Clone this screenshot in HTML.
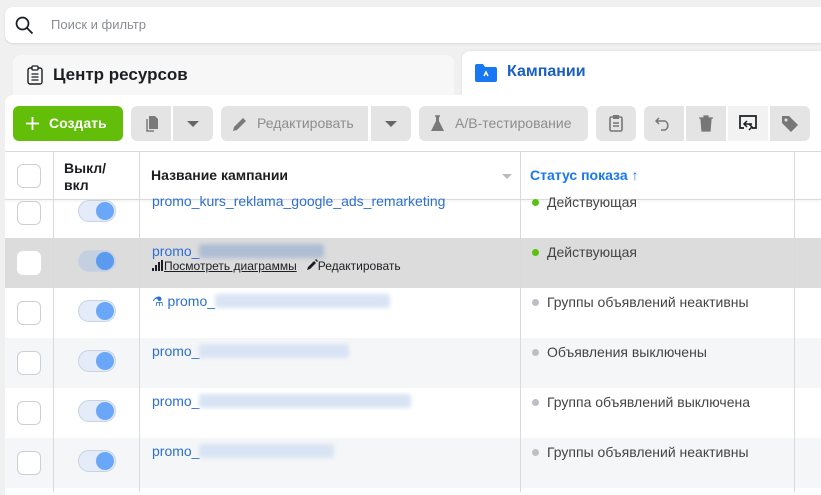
<!DOCTYPE html>
<html><head><meta charset="utf-8"><style>
*{box-sizing:border-box;margin:0;padding:0}
body{width:821px;height:490px;overflow:hidden;background:#f0f0f0;font-family:"Liberation Sans","DejaVu Sans",sans-serif;position:relative}
.abs{position:absolute}
.search{left:5px;top:7px;width:830px;height:36px;background:#fff;border-radius:8px;box-shadow:0 1px 2px rgba(0,0,0,.1)}
.search span{position:absolute;left:46px;top:10px;font-size:13px;color:#8a8d91}
.tabL{left:13px;top:55px;width:441px;height:50px;background:#f7f7f7;border-radius:8px 8px 0 0}
.tabR{left:462px;top:51px;width:370px;height:55px;background:#fff;border-radius:8px 8px 0 0;box-shadow:0 0 3px rgba(0,0,0,.08)}
.panel{left:5px;top:95px;width:830px;height:400px;background:#fff;border-radius:8px 8px 0 0}
.btn{position:absolute;top:106px;height:35px;background:#e4e4e4;border-radius:6px;font-size:14px;color:#8d8d8d}
.hline{position:absolute;left:5px;width:816px;height:1px;background:#dadada}
.vline{position:absolute;width:1px;background:#dadada}
.row{position:absolute;left:5px;width:816px;height:50px}
.cb{position:absolute;left:17px;width:24px;height:24px;border:1px solid #ccd0d5;border-radius:6px;background:#fff}
.tg{position:absolute;left:78px;width:38px;height:22px;border-radius:11px;background:#e3ecf8;border:1px solid #c9d3e0}
.tg i{position:absolute;right:1px;top:1px;width:18px;height:18px;border-radius:50%;background:#6aa7f8}
.nm{position:absolute;left:152px;font-size:14px;color:#2d6fd2}
.bl{display:inline-block;height:14px;vertical-align:-2px;background:#c8d6ea;filter:blur(2px);border-radius:3px}
.st{position:absolute;left:532px;font-size:14px;color:#444}
.st i{display:inline-block;width:7px;height:7px;border-radius:50%;background:#bcc0c4;margin-right:8px;vertical-align:1px}
</style></head><body>
<div class="abs search">
<svg class="abs" style="left:10px;top:9px" width="19" height="19" viewBox="0 0 19 19"><circle cx="7.5" cy="7.5" r="6" fill="none" stroke="#1c1e21" stroke-width="1.7"/><path d="M12 12l5.5 5.5" stroke="#1c1e21" stroke-width="1.8"/></svg>
<span>Поиск и фильтр</span></div>
<div class="abs tabL">
<svg class="abs" style="left:14px;top:10px" width="16" height="20" viewBox="0 0 16 20"><rect x="1" y="3" width="14" height="16" rx="2" fill="none" stroke="#1c1e21" stroke-width="1.4"/><rect x="5" y="1" width="6" height="4" rx="1" fill="#fff" stroke="#1c1e21" stroke-width="1.3"/><path d="M4.5 9h7M4.5 12h7M4.5 15h7" stroke="#1c1e21" stroke-width="1.2"/></svg>
<span class="abs" style="left:40px;top:10px;font-size:17px;font-weight:bold;color:#1c1e21">Центр ресурсов</span></div>
<div class="abs tabR">
<svg class="abs" style="left:13px;top:13px" width="22" height="18" viewBox="0 0 22 18"><path d="M0 2a2 2 0 012-2h6l2 3h10a2 2 0 012 2v11a2 2 0 01-2 2H2a2 2 0 01-2-2z" fill="#1877f2"/><path d="M9 12l2-4 2 4" stroke="#fff" stroke-width="1.5" fill="none"/></svg>
<span class="abs" style="left:45px;top:12px;font-size:16px;font-weight:bold;color:#1a5fc9">Кампании</span></div>
<div class="abs panel"></div>
<div class="btn" style="left:13px;width:110px;background:#63be09;color:#fff;font-weight:bold"><svg class="abs" style="left:13px;top:11px" width="13" height="13" viewBox="0 0 13 13"><path d="M6.5 0v13M0 6.5h13" stroke="#fff" stroke-width="1.8"/></svg><span class="abs" style="left:36px;top:9px">Создать</span></div>
<div class="btn" style="left:131px;width:40px;border-radius:6px 0 0 6px"><svg class="abs" style="left:12px;top:9px" width="17" height="17" viewBox="0 0 17 17"><path d="M6 1h6l3 3v10H6z" fill="#7a7a7a"/><path d="M4 4v12h7" fill="none" stroke="#7a7a7a" stroke-width="1.5"/></svg></div>
<div class="btn" style="left:173px;width:40px;border-radius:0 6px 6px 0"><span class="abs" style="left:14px;top:15px;border:6px solid transparent;border-top:6px solid #666"></span></div>
<div class="btn" style="left:221px;width:147px;border-radius:6px 0 0 6px"><svg class="abs" style="left:11px;top:9px" width="17" height="17" viewBox="0 0 17 17"><path d="M1 16l1-4 9-9 3 3-9 9z" fill="#7a7a7a"/></svg><span class="abs" style="left:36px;top:9px">Редактировать</span></div>
<div class="btn" style="left:371px;width:40px;border-radius:0 6px 6px 0"><span class="abs" style="left:14px;top:15px;border:6px solid transparent;border-top:6px solid #666"></span></div>
<div class="btn" style="left:419px;width:169px"><svg class="abs" style="left:11px;top:9px" width="15" height="17" viewBox="0 0 15 17"><path d="M5 1h5M6 1v5L1 16h13L9 6V1" fill="#7a7a7a"/><path d="M5 1h5" stroke="#7a7a7a" stroke-width="1.5"/></svg><span class="abs" style="left:36px;top:9px">A/B-тестирование</span></div>
<div class="btn" style="left:596px;width:40px"><svg class="abs" style="left:13px;top:8px" width="14" height="18" viewBox="0 0 14 18"><rect x="1" y="3" width="12" height="14" rx="1.5" fill="none" stroke="#777" stroke-width="1.6"/><rect x="4" y="1" width="6" height="4" fill="#777"/><path d="M4 9h6M4 12h6" stroke="#777" stroke-width="1.4"/></svg></div>
<div class="btn" style="left:644px;width:40px;border-radius:6px 0 0 6px"><svg class="abs" style="left:11px;top:10px" width="17" height="15" viewBox="0 0 17 15"><path d="M4 2L1 5l3 3M1 5h9a5 5 0 010 9H6" fill="none" stroke="#777" stroke-width="1.5"/></svg></div>
<div class="btn" style="left:686px;width:40px;border-radius:0"><svg class="abs" style="left:13px;top:9px" width="14" height="17" viewBox="0 0 14 17"><path d="M0 3h14M5 3V1h4v2M2 4l1 12h8l1-12z" fill="#777" stroke="#777" stroke-width="1.2"/></svg></div>
<div class="btn" style="left:728px;width:40px;border-radius:0;background:#f2f2f2"><svg class="abs" style="left:11px;top:9px" width="18" height="17" viewBox="0 0 18 17"><path d="M5 13H1V1h16v12h-4" fill="none" stroke="#1c1e21" stroke-width="1.7"/><path d="M8 6l-3 3 3 3M5 9h8M10 9l3 3-3 3" fill="none" stroke="#1c1e21" stroke-width="1.5"/></svg></div>
<div class="btn" style="left:770px;width:40px;border-radius:0 6px 6px 0"><svg class="abs" style="left:11px;top:9px" width="18" height="17" viewBox="0 0 18 17"><path d="M1 1h7l9 9-7 7-9-9z" fill="#777"/><circle cx="5" cy="5" r="1.5" fill="#e4e4e4"/></svg></div>

<div class="hline" style="top:151px"></div>
<div class="row" style="top:238px;background:#dcdcdd"></div>
<div class="row" style="top:338px;background:#f5f6f7"></div>
<div class="row" style="top:438px;background:#f5f6f7"></div>
<div class="hline" style="top:199px;box-shadow:0 1px 2px rgba(0,0,0,.1)"></div>
<div class="vline" style="left:53px;top:152px;height:340px"></div>
<div class="vline" style="left:139px;top:152px;height:340px"></div>
<div class="vline" style="left:520px;top:152px;height:340px"></div>
<div class="vline" style="left:794px;top:152px;height:340px"></div>
<div class="cb" style="top:164px"></div>
<span class="abs" style="left:64px;top:160px;font-size:14px;font-weight:bold;color:#1c1e21;line-height:17px">Выкл/<br>вкл</span>
<span class="abs" style="left:151px;top:167px;font-size:14px;font-weight:bold;color:#1c1e21">Название кампании</span>
<span class="abs" style="left:502px;top:174px;border:5px solid transparent;border-top:5px solid #bbb"></span>
<span class="abs" style="left:530px;top:167px;font-size:14px;font-weight:bold;color:#1877f2">Статус показа ↑</span>

<div class="cb" style="top:201px"></div><div class="tg" style="top:200px"><i></i></div>
<div class="nm" style="top:193px">promo_kurs_reklama_google_ads_remarketing</div>
<div class="st" style="top:194px"><i style="background:#5ac20d"></i>Действующая</div>

<div class="cb" style="top:251px;border-color:#fff"></div><div class="tg" style="top:250px;background:#c4d0e2"><i style="background:#5a9bf0"></i></div>
<div class="nm" style="top:243px">promo_<span class="bl" style="width:125px;background:#aebdd2"></span></div>
<div class="abs" style="left:152px;top:259px;font-size:12px;color:#1c1e21"><svg width="12" height="11" viewBox="0 0 12 11" style="vertical-align:-1px"><path d="M1 8v3M4 5v6M7 2v9M10 0v11" stroke="#1c1e21" stroke-width="2"/></svg><span style="text-decoration:underline">Посмотреть диаграммы</span>&nbsp;&nbsp; <svg width="11" height="11" viewBox="0 0 11 11"><path d="M0 11l1-3 6-6 2 2-6 6z M8 1l1-1 2 2-1 1z" fill="#1c1e21"/></svg>Редактировать</div>
<div class="st" style="top:244px"><i style="background:#5ac20d"></i>Действующая</div>

<div class="cb" style="top:301px"></div><div class="tg" style="top:300px"><i></i></div>
<div class="nm" style="top:293px"><span style="font-size:13px">⚗</span> promo_<span class="bl" style="width:175px;background:#d8e4f4"></span></div>
<div class="st" style="top:294px"><i></i>Группы объявлений неактивны</div>

<div class="cb" style="top:351px"></div><div class="tg" style="top:350px"><i></i></div>
<div class="nm" style="top:343px">promo_<span class="bl" style="width:150px;background:#d8e4f4"></span></div>
<div class="st" style="top:344px"><i></i>Объявления выключены</div>

<div class="cb" style="top:401px"></div><div class="tg" style="top:400px"><i></i></div>
<div class="nm" style="top:393px">promo_<span class="bl" style="width:212px;background:#d8e4f4"></span></div>
<div class="st" style="top:394px"><i></i>Группа объявлений выключена</div>

<div class="cb" style="top:451px"></div><div class="tg" style="top:450px"><i></i></div>
<div class="nm" style="top:443px">promo_<span class="bl" style="width:135px;background:#d8e4f4"></span></div>
<div class="st" style="top:444px"><i></i>Группы объявлений неактивны</div>
</body></html>
